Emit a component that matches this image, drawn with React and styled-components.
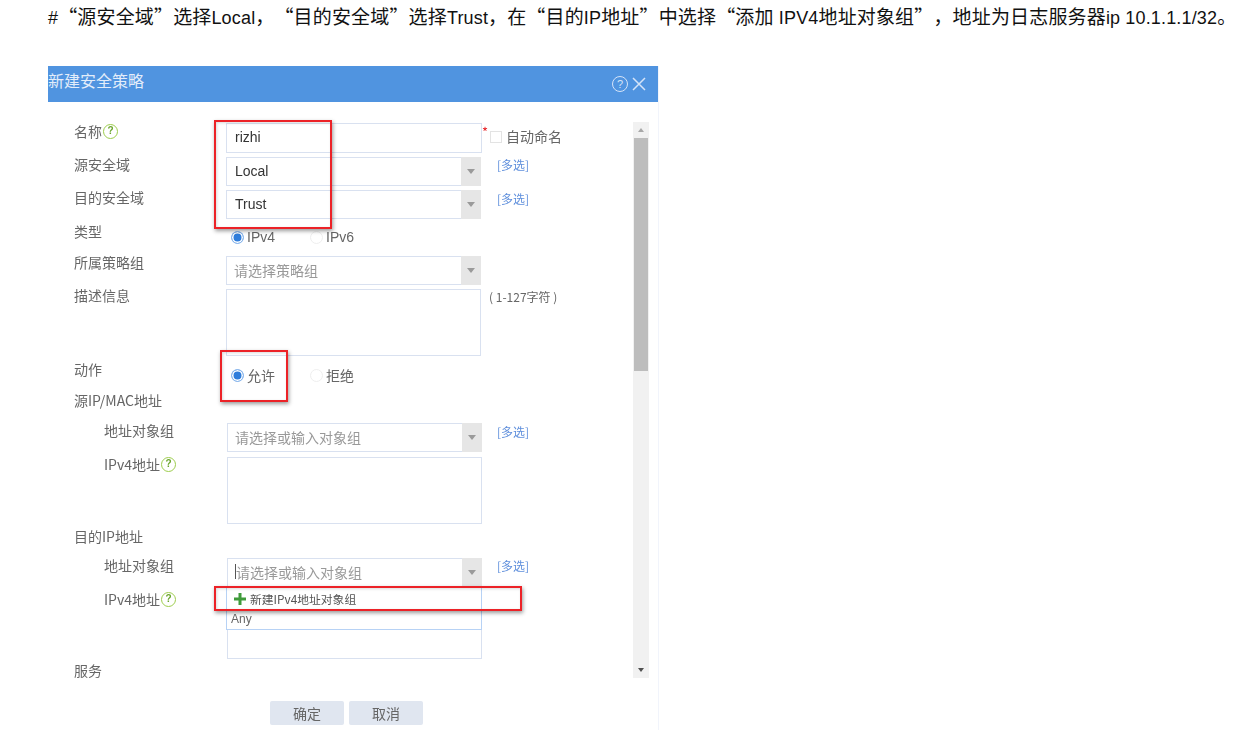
import React from "react";
import styled, { createGlobalStyle } from "styled-components";

const GlobalStyle = createGlobalStyle`
  html, body {
    margin: 0;
    padding: 0;
    background: #fff;
    font-family: "Noto Sans CJK SC", "Liberation Sans", sans-serif;
  }
`;

const Page = styled.div`
  width: 1234px;
  height: 735px;
  overflow: hidden;
  box-sizing: border-box;
  padding-left: 48px;
`;

const Caption = styled.p`
  margin: 0;
  height: 66px;
  padding-top: 4px;
  box-sizing: border-box;
  line-height: 24px;
  font-size: 18px;
  letter-spacing: 0.16px;
  color: #111;
  white-space: nowrap;
  font-family: "Liberation Sans", sans-serif;
`;

const Cjk = styled.span`
  font-family: "Noto Sans CJK SC", sans-serif;
  font-size: 19px;
  font-kerning: none;
  text-spacing-trim: space-all;
  font-feature-settings: "chws" 0, "palt" 0, "halt" ${(p) => (p.$half ? 1 : 0)};
`;

const Dialog = styled.div`
  position: relative;
  width: 610px;
  height: 664px;
  border-right: 1px solid #f1f4fb;
  filter: blur(0.35px);
`;

const Header = styled.header`
  height: 36px;
  background: #5094e0;
  color: #e3edfa;
  display: flex;
  align-items: center;
  justify-content: space-between;
  padding-right: 12px;
  font-size: 16px;
`;

const Title = styled.span`
  line-height: 28px;
  margin-bottom: 8px;
`;

const HeaderIcons = styled.div`
  display: flex;
  align-items: center;
  gap: 4px;
  color: #d5e4f8;
`;

const HelpMark = styled.span`
  display: inline-flex;
  align-items: center;
  justify-content: center;
  box-sizing: border-box;
  width: ${(p) => p.$size}px;
  height: ${(p) => p.$size}px;
  border-radius: 50%;
  border: 1.5px solid ${(p) => (p.$light ? "#d5e4f8" : "#9ccc4c")};
  color: ${(p) => (p.$light ? "#d5e4f8" : "#6aa52c")};
  font-size: ${(p) => p.$size - 5}px;
  line-height: 1;
  font-family: "Liberation Sans", sans-serif;
  font-weight: ${(p) => (p.$light ? 400 : 700)};
  margin-left: ${(p) => (p.$light ? 0 : 1)}px;
`;

const Body = styled.div`
  display: flex;
  height: 556px;
  padding-top: 20px;
`;

const Form = styled.div`
  width: 585px;
  padding: 1px 0 0 26px;
  box-sizing: border-box;
`;

const Row = styled.div`
  display: grid;
  grid-template-columns: ${(p) => (p.$indent ? "153px 255px" : "152px 256px")} auto;
  margin-top: ${(p) => p.$gap || 0}px;
  min-height: ${(p) => p.$height || 0}px;
`;

const Label = styled.div`
  display: flex;
  align-items: center;
  height: 20px;
  margin-top: ${(p) => p.$lift ?? (p.$indent ? -3 : -4)}px;
  padding-left: ${(p) => (p.$indent ? 30 : 0)}px;
  font-size: 14px;
  line-height: 20px;
  color: #666;
  white-space: nowrap;
`;

const Control = styled.div`
  position: relative;
`;

const Box = styled.div`
  box-sizing: border-box;
  height: ${(p) => p.$height}px;
  width: ${(p) => (p.$width ? `${p.$width}px` : "auto")};
  border: 1px solid #d9e1f0;
  background: #fff;
  padding: 0 0 2px ${(p) => (p.$muted ? 7 : 8)}px;
  display: flex;
  align-items: center;
  font-size: 14px;
  font-family: "Liberation Sans", "Noto Sans CJK SC", sans-serif;
  color: ${(p) => (p.$muted ? "#999" : "#333")};
`;

const SelectWrap = styled.div`
  display: flex;
  width: 255px;
  height: 29px;
`;

const SelectBox = styled(Box)`
  flex: 1;
  border-right: none;
`;

const Arrow = styled.div`
  width: 20px;
  background: #e6e6e6;
  display: flex;
  align-items: center;
  justify-content: center;

  &::after {
    content: "";
    border-left: 4px solid transparent;
    border-right: 4px solid transparent;
    border-top: 5px solid #9a9a9a;
  }
`;

const Caret = styled.span`
  display: inline-block;
  width: 1px;
  height: 15px;
  background: #555;
`;

const Aside = styled.div`
  display: flex;
  align-items: flex-start;
  padding-left: ${(p) => p.$left || 0}px;
  margin-top: ${(p) => p.$top || 0}px;
  font-size: 12px;
  line-height: 16px;
  color: #666;
  white-space: nowrap;
`;

const MultiLink = styled.a`
  color: #5f8fdc;
  font-size: 12px;
  line-height: 16px;
`;

const Required = styled.span`
  color: #e8262a;
  font-size: 13px;
  line-height: 12px;
  margin-top: 3px;
  width: 8px;
`;

const CheckBox = styled.span`
  width: 12px;
  height: 12px;
  box-sizing: border-box;
  border: 1px solid #e3e3e3;
  margin-top: 8px;
`;

const CheckText = styled.span`
  font-size: 14px;
  line-height: 20px;
  margin: 3px 0 0 4px;
`;

const RadioGroup = styled.div`
  display: flex;
  align-items: center;
  height: 100%;
  padding-left: 5px;
`;

const RadioItem = styled.label`
  display: flex;
  align-items: center;
  width: 79px;
  gap: 3px;
  font-size: 14px;
  color: #666;
  font-family: "Liberation Sans", "Noto Sans CJK SC", sans-serif;
`;

const RadioDot = styled.span`
  width: 13px;
  height: 13px;
  box-sizing: border-box;
  border-radius: 50%;
  border: 1px solid ${(p) => (p.$on ? "#8db8ec" : "#eee")};
  background: ${(p) => (p.$on ? "#2f7ddb" : "#fff")};
  box-shadow: ${(p) => (p.$on ? "inset 0 0 0 1.5px #fff" : "none")};
`;

const Dropdown = styled.div`
  position: absolute;
  left: -1px;
  right: 0;
  top: -5px;
  height: 43px;
  box-sizing: border-box;
  border: 1px solid #b7d2f5;
  border-top: none;
  background: #fff;
`;

const NewItem = styled.div`
  display: flex;
  align-items: center;
  gap: 4px;
  height: 23px;
  padding-left: 7px;
  font-size: 11.8px;
  color: #555;
`;

const AnyItem = styled.div`
  height: 18px;
  padding-left: 4px;
  font-size: 12px;
  line-height: 18px;
  color: #666;
  font-family: "Liberation Sans", sans-serif;
`;

const Scrollbar = styled.div`
  width: 16px;
  height: 556px;
  background: #f1f1f1;
  display: flex;
  flex-direction: column;
  align-items: center;
`;

const ScrollButton = styled.div`
  height: 16px;
  display: flex;
  align-items: center;
  justify-content: center;

  &::after {
    content: "";
    border-left: 3.5px solid transparent;
    border-right: 3.5px solid transparent;
    ${(p) => (p.$up ? "border-bottom: 4px solid #a8a8a8;" : "border-top: 4px solid #505050;")}
  }
`;

const ScrollThumb = styled.div`
  width: 14px;
  height: 233px;
  background: #bdbdbd;
  margin-bottom: auto;
`;

const Footer = styled.footer`
  display: flex;
  justify-content: center;
  gap: 5px;
  margin-top: 23px;
  padding-right: 13px;
`;

const Button = styled.button`
  width: 74px;
  height: 24px;
  border: none;
  border-radius: 2px;
  background: #e0e6f0;
  color: #666;
  font-size: 14px;
  font-family: inherit;
  padding: 0;
`;

// red annotation boxes drawn over the screenshot
const Mark = styled.div`
  position: absolute;
  left: ${(p) => p.$x}px;
  top: ${(p) => p.$y}px;
  width: ${(p) => p.$w}px;
  height: ${(p) => p.$h}px;
  box-sizing: border-box;
  border: 2px solid #ec2227;
  box-shadow: 1px 2px 4px rgba(0, 0, 0, 0.4), inset 1px 1px 3px rgba(0, 0, 0, 0.15);
`;

const Select = ({ muted, caret, children }) => (
  <SelectWrap>
    <SelectBox $height={29} $muted={muted}>
      {caret && <Caret />}
      {children}
    </SelectBox>
    <Arrow />
  </SelectWrap>
);

const Multi = ({ top = 0 }) => (
  <Aside $left={15} $top={top}>
    <MultiLink>[多选]</MultiLink>
  </Aside>
);

const Help = () => <HelpMark $size={15}>?</HelpMark>;

const App = () => {
  return (
    <Page>
      <GlobalStyle />
      <Caption>
        #<Cjk>“源安全域”选择</Cjk>Local<Cjk>，“目的安全域”选择</Cjk>Trust<Cjk>，在“目的</Cjk>IP<Cjk>地址”中选择“添加</Cjk> IPV4<Cjk>地址对象组”，地址为日志服务器</Cjk>ip 10.1.1.1/32<Cjk $half>。</Cjk>
      </Caption>
      <Dialog>
        <Header>
          <Title>新建安全策略</Title>
          <HeaderIcons>
            <HelpMark $size={16} $light>?</HelpMark>
            <svg width="14" height="14" viewBox="0 0 14 14" stroke="currentColor" strokeWidth="1.5">
              <path d="M1 1l12 12M13 1L1 13" />
            </svg>
          </HeaderIcons>
        </Header>
        <Body>
          <Form>
            <Row>
              <Label $lift={-2}>名称<Help /></Label>
              <Box $height={30}>rizhi</Box>
              <Aside>
                <Required>*</Required>
                <CheckBox />
                <CheckText>自动命名</CheckText>
              </Aside>
            </Row>
            <Row $gap={4}>
              <Label $lift={-3}>源安全域</Label>
              <Select>Local</Select>
              <Multi />
            </Row>
            <Row $gap={4}>
              <Label $lift={-3}>目的安全域</Label>
              <Select>Trust</Select>
              <Multi top={1} />
            </Row>
            <Row $gap={5} $height={26}>
              <Label $lift={-3}>类型</Label>
              <RadioGroup>
                <RadioItem><RadioDot $on />IPv4</RadioItem>
                <RadioItem><RadioDot />IPv6</RadioItem>
              </RadioGroup>
            </Row>
            <Row $gap={6}>
              <Label>所属策略组</Label>
              <Select muted>请选择策略组</Select>
            </Row>
            <Row $gap={4}>
              <Label>描述信息</Label>
              <Box $height={67} $width={255} />
              <Aside $left={7}>( 1-127字符 )</Aside>
            </Row>
            <Row $gap={7} $height={24}>
              <Label>动作</Label>
              <RadioGroup>
                <RadioItem><RadioDot $on />允许</RadioItem>
                <RadioItem><RadioDot />拒绝</RadioItem>
              </RadioGroup>
            </Row>
            <Row $gap={7} $height={20}>
              <Label>源IP/MAC地址</Label>
            </Row>
            <Row $gap={9} $indent>
              <Label $indent>地址对象组</Label>
              <Select muted>请选择或输入对象组</Select>
              <Multi top={1} />
            </Row>
            <Row $gap={5} $indent>
              <Label $indent>IPv4地址<Help /></Label>
              <Box $height={67} />
            </Row>
            <Row $gap={6} $height={20}>
              <Label>目的IP地址</Label>
            </Row>
            <Row $gap={8} $indent>
              <Label $indent>地址对象组</Label>
              <Select muted caret>请选择或输入对象组</Select>
              <Multi />
            </Row>
            <Row $gap={5} $indent>
              <Label $indent>IPv4地址<Help /></Label>
              <Control>
                <Box $height={67} />
                <Dropdown>
                  <NewItem>
                    <svg width="12" height="12" viewBox="0 0 12 12" fill="#3f9a3a">
                      <path d="M4.5 0h3v4.5H12v3H7.5V12h-3V7.5H0v-3h4.5z" />
                    </svg>
                    新建IPv4地址对象组
                  </NewItem>
                  <AnyItem>Any</AnyItem>
                </Dropdown>
              </Control>
            </Row>
            <Row $gap={5}>
              <Label>服务</Label>
            </Row>
          </Form>
          <Scrollbar>
            <ScrollButton $up />
            <ScrollThumb />
            <ScrollButton />
          </Scrollbar>
        </Body>
        <Footer>
          <Button>确定</Button>
          <Button>取消</Button>
        </Footer>
        <Mark $x={166} $y={54} $w={118} $h={109} />
        <Mark $x={172} $y={284} $w={68} $h={52} />
        <Mark $x={166} $y={520} $w={308} $h={25} />
      </Dialog>
    </Page>
  );
};

export default App;
